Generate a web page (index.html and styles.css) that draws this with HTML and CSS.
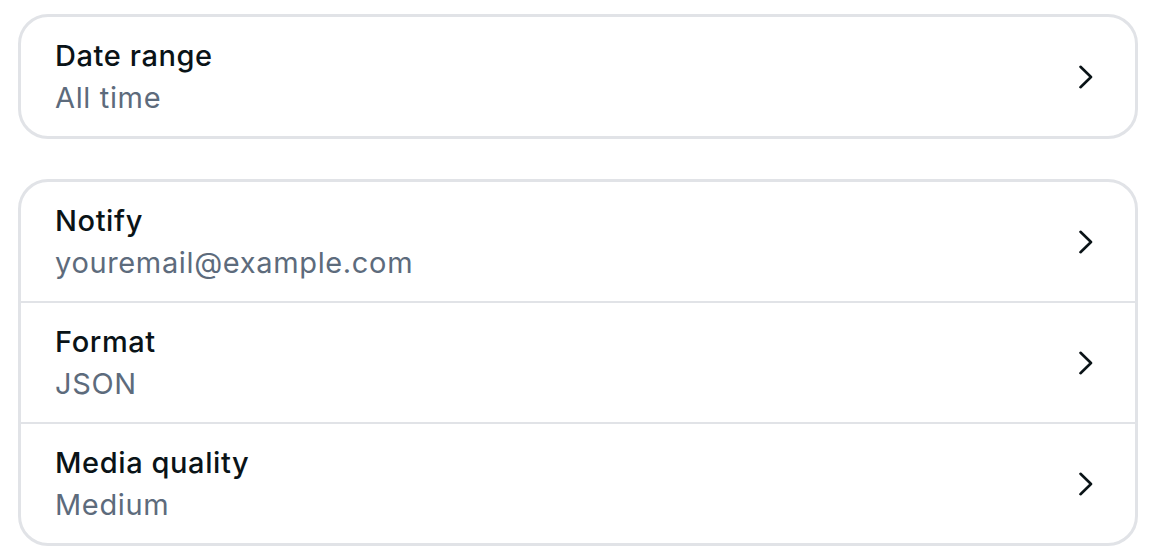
FILE: index.html
```html
<!DOCTYPE html>
<html>
<head>
<meta charset="utf-8">
<link rel="stylesheet" href="styles.css">
</head>
<body>
<div class="page">
  <div class="card">
    <div class="row">
      <div class="text">
        <div class="title">Date range</div>
        <div class="value">All time</div>
      </div>
      <svg class="chev" width="16" height="24" viewBox="0 0 16 24"><path d="M2.5 1.8 L13 12 L2.5 22.2"/></svg>
    </div>
  </div>
  <div class="card">
    <div class="row">
      <div class="text">
        <div class="title">Notify</div>
        <div class="value">youremail@example.com</div>
      </div>
      <svg class="chev" width="16" height="24" viewBox="0 0 16 24"><path d="M2.5 1.8 L13 12 L2.5 22.2"/></svg>
    </div>
    <div class="row">
      <div class="text">
        <div class="title">Format</div>
        <div class="value">JSON</div>
      </div>
      <svg class="chev" width="16" height="24" viewBox="0 0 16 24"><path d="M2.5 1.8 L13 12 L2.5 22.2"/></svg>
    </div>
    <div class="row">
      <div class="text">
        <div class="title">Media quality</div>
        <div class="value">Medium</div>
      </div>
      <svg class="chev" width="16" height="24" viewBox="0 0 16 24"><path d="M2.5 1.8 L13 12 L2.5 22.2"/></svg>
    </div>
  </div>
</div>
</body>
</html>
```

FILE: styles.css
```css
html, body {
  margin: 0;
  padding: 0;
  background: #ffffff;
}
body {
  font-family: Inter, "Noto Sans", sans-serif;
}
.page {
  padding: 14px 20px 0 18px;
  display: flex;
  flex-direction: column;
  gap: 40px;
}
.card {
  border: 3px solid #e1e3e7;
  border-radius: 30px;
  background: #fff;
  overflow: hidden;
}
.row {
  display: flex;
  align-items: center;
  justify-content: space-between;
  padding: 18px 41px 17px 34px;
  min-height: 84px;
}
.row + .row {
  border-top: 2px solid #e1e3e7;
}
.text {
  display: flex;
  flex-direction: column;
}
.title {
  font-size: 29px;
  line-height: 42px;
  letter-spacing: 0.6px;
  color: #0a1317;
  font-weight: 500;
}
.value {
  font-size: 29px;
  line-height: 42px;
  letter-spacing: 0.65px;
  color: #5d6b7c;
}
.chev {
  flex: none;
}
.chev path {
  fill: none;
  stroke: #0a1317;
  stroke-width: 2.6;
  stroke-linecap: round;
  stroke-linejoin: round;
}
```
